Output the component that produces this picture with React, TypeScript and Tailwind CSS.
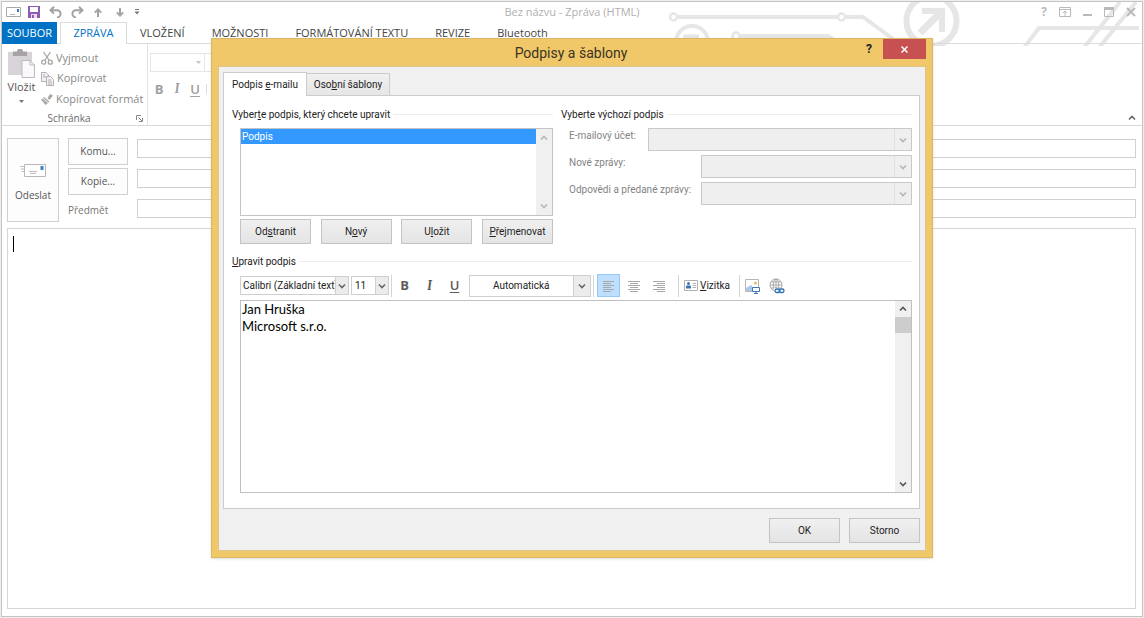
import { useState } from 'react';
import type { ReactNode } from 'react';

const ribbonTabs = ['VLOŽENÍ', 'MOŽNOSTI', 'FORMÁTOVÁNÍ TEXTU', 'REVIZE', 'Bluetooth'];

function Chevron({ up = false, className = '' }: { up?: boolean; className?: string }) {
  return (
    <svg viewBox="0 0 8 6" className={`h-[6px] w-[8px] ${className}`} fill="none" stroke="currentColor" strokeWidth="1.6">
      <path d={up ? 'M1 4.5 4 1.5 7 4.5' : 'M1 1.5 4 4.5 7 1.5'} />
    </svg>
  );
}

type ComboProps = {
  label: string;
  id?: string;
  value?: string;
  disabled?: boolean;
  className?: string;
  selectClassName?: string;
  arrowClassName?: string;
  arrow?: ReactNode;
};

function Combo({ label, id, value = '', disabled, className = '', selectClassName = '', arrowClassName = '', arrow }: ComboProps) {
  return (
    <div className={`relative border ${className}`}>
      <select
        id={id}
        aria-label={id ? undefined : label}
        disabled={disabled}
        defaultValue={value}
        className={`block h-full w-full appearance-none bg-transparent text-[10px] outline-none ${selectClassName}`}
      >
        <option value={value}>{value}</option>
      </select>
      <span className={`pointer-events-none absolute inset-y-0 right-0 flex items-center justify-center border-l ${arrowClassName}`}>
        {arrow ?? <Chevron />}
      </span>
    </div>
  );
}

function DialogButton({ children, onClick }: { children: ReactNode; onClick?: () => void }) {
  return (
    <button
      type="button"
      onClick={onClick}
      className="h-[25px] w-[71px] border border-[#c4c4c4] bg-linear-to-b from-[#f0f0f0] to-[#e4e4e4] text-[10px] text-[#222]"
    >
      {children}
    </button>
  );
}

function GroupTitle({ children }: { children: ReactNode }) {
  return (
    <div className="flex h-4 items-center gap-[3px] text-[10px] text-[#222]">
      <span className="whitespace-nowrap">{children}</span>
      <span className="h-px flex-1 bg-[#ececec]" />
    </div>
  );
}

function CircuitArt() {
  return (
    <svg viewBox="662 -1 480 44" className="absolute top-0 right-0 h-[44px] w-[480px]" fill="none" stroke="#e6e6e6" strokeWidth="4">
      <circle cx="673.5" cy="14" r="3.5" strokeWidth="2.5" />
      <path d="M677 14H838M845 14H863L900 41" />
      <circle cx="841.5" cy="14" r="3.5" strokeWidth="2.5" />
      <circle cx="736" cy="33" r="3.5" strokeWidth="2.5" />
      <path d="M740 33H828L842 42" />
      <circle cx="931.5" cy="18" r="25" strokeWidth="6" />
      <path d="M920 30 941 9" strokeWidth="7" />
      <path d="M922 8H942V29" strokeWidth="6" />
      <circle cx="692" cy="39" r="16" strokeWidth="4" />
      <path d="M686 48V34H699M687 35 701 49" strokeWidth="5" />
      <path d="M1023 46 1039 25H1139" />
      <path d="M1083 46 1120 -1M1098 46 1136 -1" />
    </svg>
  );
}

function QuickAccess() {
  return (
    <div className="flex items-center text-[#a3a3a3]">
      <button type="button" aria-label="Zpráva" className="w-[22px]">
        <svg viewBox="0 0 15 10" className="h-[10px] w-[15px]" fill="none">
          <path d="M.5.5h14v9H.5z" fill="#fff" stroke="#a8a8a8" />
          <path d="M4 7.5h5" stroke="#b5b5b5" />
          <path d="M11 2h2v3h-2z" fill="#3c78c3" />
        </svg>
      </button>
      <button type="button" aria-label="Uložit zprávu" className="w-[21px]">
        <svg viewBox="0 0 12 12" className="size-[12px]">
          <path d="M0 0h12v12H0z" fill="#8e5bb0" />
          <path d="M2 1h8v5H2z" fill="#fff" />
          <path d="M3 8h6v4H3z" fill="#e9dff0" />
          <path d="M4 9h2v3H4z" fill="#8e5bb0" />
        </svg>
      </button>
      <button type="button" aria-label="Zpět" className="w-[22px]">
        <svg viewBox="0 0 13 12" className="h-[12px] w-[13px]" fill="none" stroke="currentColor" strokeWidth="2">
          <path d="M5 .8 1.5 4.2 5 7.6M2 4.2h6a3.6 3.6 0 0 1 0 7.200" />
        </svg>
      </button>
      <button type="button" aria-label="Znovu" className="w-[23px]">
        <svg viewBox="0 0 13 12" className="h-[12px] w-[13px]" fill="none" stroke="currentColor" strokeWidth="2">
          <path d="M8 .8 11.5 4.2 8 7.6M11 4.2H5a3.6 3.6 0 0 0 0 7.200" />
        </svg>
      </button>
      <button type="button" aria-label="Předchozí položka" className="w-[22px]">
        <svg viewBox="0 0 8 9" className="h-[9px] w-[8px]" fill="none" stroke="currentColor" strokeWidth="2">
          <path d="M4 9V1.500M.8 4.600 4 1.400l3.200 3.200" />
        </svg>
      </button>
      <button type="button" aria-label="Další položka" className="w-[18px]">
        <svg viewBox="0 0 8 9" className="h-[9px] w-[8px]" fill="none" stroke="currentColor" strokeWidth="2">
          <path d="M4 0v7.500M.8 4.400 4 7.600l3.200-3.200" />
        </svg>
      </button>
      <button type="button" aria-label="Přizpůsobit panel">
        <svg viewBox="0 0 6 6" className="size-[6px]" fill="#777">
          <path d="M1 0h4v1H1zM.5 2.500h5L3 5.500z" />
        </svg>
      </button>
    </div>
  );
}

function WindowButtons() {
  return (
    <div className="flex items-center gap-[12px] text-[#bababa]">
      <button type="button" aria-label="Nápověda" className="text-[12px] leading-none font-bold">?</button>
      <button type="button" aria-label="Zobrazení pásu karet">
        <svg viewBox="0 0 12 10" className="h-[10px] w-[12px]" fill="none" stroke="currentColor">
          <path d="M.5.5h11v9H.5zM.5 2.500h11M6 9V4.500M4 6l2-2 2 2" />
        </svg>
      </button>
      <button type="button" aria-label="Minimalizovat">
        <svg viewBox="0 0 9 10" className="h-[10px] w-[9px]" fill="currentColor">
          <path d="M0 7h9v2H0z" />
        </svg>
      </button>
      <button type="button" aria-label="Maximalizovat">
        <svg viewBox="0 0 10 10" className="size-[10px]" fill="none" stroke="currentColor">
          <path d="M.5 1v8.500h9V1" />
          <path d="M0 1.500h10" strokeWidth="3" />
        </svg>
      </button>
      <button type="button" aria-label="Zavřít">
        <svg viewBox="0 0 10 10" className="size-[10px]" fill="none" stroke="currentColor" strokeWidth="2">
          <path d="m1 1 8 8M9 1 1 9" />
        </svg>
      </button>
    </div>
  );
}

function Ribbon() {
  return (
    <div className="flex h-[82px] border-b border-[#d9d9d9] text-[11px] text-[#8a8a8a]">
      <div className="flex w-[146px] flex-col border-r border-[#e3e3e3]">
        <div className="flex">
          <button type="button" className="flex w-[39px] flex-col items-center pt-[5px] text-[#555]">
            <svg viewBox="0 0 27 30" className="h-[30px] w-[27px]">
              <path d="M0 3h24v23H0z" fill="#d8d3d8" />
              <path d="M5 2.500h4a3 3 0 0 1 6 0h4V7H5z" fill="#a6a2a6" />
              <path d="M14 11.500h8l4.500 4.500v12.500H14z" fill="#fcf9fc" stroke="#bdb8bd" />
              <path d="M22 11.500V16h4.500" fill="none" stroke="#bdb8bd" />
            </svg>
            <span className="leading-4">Vložit</span>
            <svg viewBox="0 0 5 3" className="mt-[5px] h-[3px] w-[5px]" fill="#777">
              <path d="M0 0h5L2.500 3z" />
            </svg>
          </button>
          <div className="flex flex-col pt-[4px]">
            <button type="button" className="flex h-[20px] items-center gap-[3px]">
              <svg viewBox="0 0 12 13" className="h-[13px] w-[12px]" fill="none" stroke="#a8a8a8" strokeWidth="1.3">
                <path d="M2.500 0 8.300 8.500M9.500 0 3.700 8.500" />
                <circle cx="2.7" cy="10.2" r="2" />
                <circle cx="9.3" cy="10.2" r="2" />
              </svg>
              Vyjmout
            </button>
            <button type="button" className="flex h-[21px] items-center gap-[3px]">
              <svg viewBox="0 0 13 14" className="h-[14px] w-[13px]" fill="#f5f1f5" stroke="#b3aeb3">
                <path d="M.5.5H5l2.500 2.500v6.500h-7z" />
                <path d="M5.500 4.500h4l3 3v6h-7zM7 8h3M7 10h4M7 12h4M2 3h2M2 5h3" />
              </svg>
              Kopírovat
            </button>
            <button type="button" className="flex h-[20px] items-center gap-[3px]">
              <svg viewBox="0 0 12 11" className="h-[11px] w-[12px]" fill="#a8a8a8">
                <path d="M9 0 12 1.500 8.500 6 6.500 4zM3 3l5.500 4.500-1 1L2 4zM0 5.500 1.500 4.500 7 9 4.500 11z" />
              </svg>
              Kopírovat formát
            </button>
          </div>
        </div>
        <div className="mt-auto flex h-[13px] items-center text-[10px] text-[#6a6a6a]">
          <span className="w-[134px] text-center">Schránka</span>
          <button type="button" aria-label="Otevřít schránku">
            <svg viewBox="0 0 7 7" className="size-[7px]" fill="none" stroke="#888">
              <path d="M.5 5V.5H5M2.500 2.500 6 6M6.500 3v3.500H3" />
            </svg>
          </button>
        </div>
      </div>
      <div className="flex flex-col gap-[9px] pt-[9px] pl-[2px]">
        <div className="flex">
          <Combo
            label="Písmo"
            disabled
            className="h-[19px] w-[55px] border-[#e6e6e6]"
            arrowClassName="w-[12px] border-transparent"
            arrow={
              <svg viewBox="0 0 5 3" className="h-[3px] w-[5px]" fill="#c4c4c4">
                <path d="M0 0h5L2.500 3z" />
              </svg>
            }
          />
          <Combo
            label="Velikost"
            disabled
            className="h-[19px] w-[40px] border-l-0 border-[#e6e6e6]"
            arrowClassName="w-[12px] border-transparent text-[#ccc]"
          />
        </div>
        <div className="flex items-center text-[13px] leading-4 text-[#a0a0a0]">
          <button type="button" className="w-[18px] font-bold">B</button>
          <button type="button" className="w-[18px] font-serif font-bold italic">I</button>
          <button type="button" className="w-[18px] font-semibold underline underline-offset-2">U</button>
          <span className="ml-[2px] h-[10px] w-px bg-[#ddd]" />
        </div>
      </div>
      <button type="button" aria-label="Sbalit pás karet" className="mt-auto mr-[6px] mb-[4px] ml-auto text-[#666]">
        <Chevron up />
      </button>
    </div>
  );
}

function MessageForm() {
  return (
    <div className="flex gap-[9px] pt-[12px] pr-[6px] pl-[5px] text-[10px] text-[#555]">
      <button type="button" className="flex h-[84px] w-[52px] flex-col items-center gap-[10px] border border-[#d0d0d0] bg-[#fdfdfd] pt-[25px]">
        <svg viewBox="0 0 26 14" className="h-[14px] w-[26px]" fill="none">
          <path d="M4.500.5h21v12h-21z" fill="#fff" stroke="#b8b8b8" />
          <path d="M0 2.500h4M1 5h3M2 7.500h2M9 7.500h8M10 9.500h6" stroke="#bdbdbd" />
          <path d="M20.500 2h3v4h-3z" fill="#3c7fc4" />
        </svg>
        <span>Odeslat</span>
      </button>
      <div className="flex w-[60px] flex-col gap-[3px]">
        <button type="button" className="h-[27px] border border-[#d0d0d0] bg-[#fdfdfd]">Komu...</button>
        <button type="button" className="h-[27px] border border-[#d0d0d0] bg-[#fdfdfd]">Kopie...</button>
        <label htmlFor="subject" className="leading-6 text-[#777]">Předmět</label>
      </div>
      <div className="flex flex-1 flex-col gap-[11px] pt-px">
        <input aria-label="Komu" className="h-[19px] border border-[#d0d0d0] px-1 outline-none" />
        <input aria-label="Kopie" className="h-[19px] border border-[#d0d0d0] px-1 outline-none" />
        <input id="subject" className="h-[19px] border border-[#d0d0d0] px-1 outline-none" />
      </div>
    </div>
  );
}

function AlignIcon({ rows }: { rows: string }) {
  return (
    <svg viewBox="0 0 12 12" className="size-[12px]" fill="none" stroke="#a8a8a8">
      <path d={rows} />
    </svg>
  );
}

function Divider() {
  return <span className="block h-[22px] w-px bg-[#d4d4d4]" />;
}

const editorCombo = 'border-[#cfcfcf] bg-white text-[#222]';
const editorArrow = 'border-[#cfcfcf] bg-[#ececec] text-[#666]';

function SignatureToolbar() {
  return (
    <div className="flex h-[23px] items-center">
      <Combo
        label="Písmo podpisu"
        value="Calibri (Základní text)"
        className={`h-[19px] w-[109px] ${editorCombo}`}
        selectClassName="pr-[12px] pl-[2px]"
        arrowClassName={`w-[13px] ${editorArrow}`}
      />
      <Combo
        label="Velikost písma podpisu"
        value="11"
        className={`ml-[2px] h-[19px] w-[38px] ${editorCombo}`}
        selectClassName="pl-[3px]"
        arrowClassName={`w-[13px] ${editorArrow}`}
      />
      <span className="ml-[2px]"><Divider /></span>
      <div className="flex font-['Open_Sans',sans-serif] text-[13px] text-[#5c5c5c]">
        <button type="button" className="w-[25px] font-bold">B</button>
        <button type="button" className="w-[25px] font-serif font-bold italic">I</button>
        <button type="button" className="w-[25px] font-semibold underline underline-offset-2">U</button>
      </div>
      <Combo
        label="Barva písma"
        value="Automatická"
        className={`ml-[2px] h-[22px] w-[122px] ${editorCombo}`}
        selectClassName="pl-[23px]"
        arrowClassName={`w-[17px] ${editorArrow}`}
      />
      <span className="ml-[2px]"><Divider /></span>
      <div className="ml-[3px] flex w-[81px] gap-[2px]">
        <button type="button" aria-label="Zarovnat vlevo" className="flex size-[23px] items-center justify-center border border-[#98c8f5] bg-[#bfdfff]">
          <AlignIcon rows="M0 1.500h11M0 3.500h8M0 5.500h11M0 7.500h8M0 9.500h11M0 11.500h8" />
        </button>
        <button type="button" aria-label="Zarovnat na střed" className="flex size-[23px] items-center justify-center">
          <AlignIcon rows="M0 1.500h12M2 3.500h8M0 5.500h12M2 7.500h8M0 9.500h12M2 11.500h8" />
        </button>
        <button type="button" aria-label="Zarovnat vpravo" className="flex size-[23px] items-center justify-center">
          <AlignIcon rows="M0 1.500h12M4 3.500h8M0 5.500h12M4 7.500h8M0 9.500h12M4 11.500h8" />
        </button>
      </div>
      <Divider />
      <button type="button" className="ml-[5px] flex w-[55px] items-center gap-[2px] text-[10px] text-[#222]">
        <svg viewBox="0 0 14 11" className="h-[11px] w-[14px]" fill="none">
          <path d="M.5.5h13v10H.5z" fill="#fff" stroke="#b0b0b0" />
          <circle cx="4.5" cy="3.5" r="1.5" fill="#3b74b5" />
          <path d="M2 8.500V6.500a1 1 0 0 1 1-1h3a1 1 0 0 1 1 1v2z" fill="#3b74b5" />
          <path d="M8.500 3.500H12M8.500 5.500H12M8.500 7.500H12" stroke="#b0b0b0" />
        </svg>
        <span><u>V</u>izitka</span>
      </button>
      <Divider />
      <button type="button" aria-label="Vložit obrázek" className="ml-[5px]">
        <svg viewBox="0 0 16 16" className="size-[16px]" fill="none">
          <path d="M.5 1.500h13v12H.5z" fill="#fff" stroke="#b5b5b5" />
          <circle cx="10.5" cy="5" r="1.5" fill="#f0b95b" />
          <path d="M1 13V10l5-3 5 6z" fill="#a9c9e6" />
          <path d="M7.500 9.500h7v4h-7z" fill="#fff" stroke="#3c78b8" />
          <path d="M11 14v2M9 15.500h4" stroke="#3c78b8" />
        </svg>
      </button>
      <button type="button" aria-label="Vložit odkaz" className="ml-[8px]">
        <svg viewBox="0 0 16 16" className="size-[16px]" fill="none">
          <g stroke="#a8a8a8">
            <circle cx="7" cy="7" r="6" />
            <ellipse cx="7" cy="7" rx="2.7" ry="6" />
            <path d="M1 7h12M2 4h10M2 10h10M7 1v12" />
          </g>
          <path d="M5 10h11v6H5z" fill="#fff" />
          <rect x="6" y="11" width="5" height="3.5" rx="1.7" stroke="#2f6fb0" strokeWidth="1.3" />
          <rect x="10" y="11" width="5" height="3.5" rx="1.7" stroke="#2f6fb0" strokeWidth="1.3" />
        </svg>
      </button>
    </div>
  );
}

const accounts = [
  { id: 'account', label: 'E-mailový účet:', width: 'w-[264px]' },
  { id: 'new-messages', label: 'Nové zprávy:', width: 'w-[211px]' },
  { id: 'replies', label: 'Odpovědi a předané zprávy:', width: 'w-[211px]' },
];

function SignatureDialog({ onClose }: { onClose: () => void }) {
  const [text, setText] = useState('Jan Hruška\nMicrosoft s.r.o.');

  return (
    <div
      role="dialog"
      aria-labelledby="dialog-title"
      className="absolute inset-x-0 top-[38px] mx-auto w-[722px] border border-[#d9b765] bg-[#f0c869] px-[6px] pb-[6px] font-[Roboto,'Open_Sans',sans-serif] shadow-sm"
    >
      <div className="flex h-[27px] items-start">
        <div className="w-[58px]" />
        <h1 id="dialog-title" className="flex-1 text-center text-[14px] leading-7 text-[#3a3323]">Podpisy a šablony</h1>
        <button type="button" aria-label="Nápověda k dialogu" className="w-[17px] text-left text-[12px] leading-5 font-bold text-[#222]">?</button>
        <button type="button" aria-label="Zavřít dialog" onClick={onClose} className="flex h-[20px] w-[43px] items-center justify-center bg-[#c75050] text-white">
          <svg viewBox="0 0 7 7" className="size-[7px]" fill="none" stroke="currentColor" strokeWidth="1.5">
            <path d="m.5.5 6 6M6.500.5l-6 6" />
          </svg>
        </button>
      </div>

      <div className="border border-[#dcc58e] bg-[#f0f0f0] pt-[5px] pr-[5px] pb-[7px] pl-[4px]">
        <div role="tablist" className="flex h-[23px] items-end text-[10px] text-[#222]">
          <button type="button" role="tab" aria-selected="true" className="z-10 -mb-px h-[24px] w-[84px] border border-b-0 border-[#ccc] bg-white">
            Podpis <u>e</u>-mailu
          </button>
          <button type="button" role="tab" aria-selected="false" className="h-[22px] w-[83px] border border-b-0 border-l-0 border-[#ccc] bg-linear-to-b from-[#f0f0f0] to-[#e6e6e6]">
            Oso<u>b</u>ní šablony
          </button>
        </div>

        <div className="border border-[#ccc] bg-white pt-[10px] pr-[7px] pb-[15px] pl-[8px]">
          <div className="flex gap-[8px]">
            <section className="w-[321px]">
              <GroupTitle>Vyber<u>t</u>e podpis, který chcete upravit</GroupTitle>
              <div className="mt-[6px] ml-[8px] flex h-[88px] border border-[#c4c4c4]">
                <ul role="listbox" aria-label="Podpisy" className="flex-1 bg-white text-[10px]">
                  <li role="option" aria-selected="true" className="h-[15px] bg-[#3399ff] px-px leading-[15px] text-white">Podpis</li>
                </ul>
                <div className="flex w-[16px] flex-col items-center justify-between bg-[#f0f0f0] py-[6px] text-[#b5b5b5]">
                  <Chevron up />
                  <Chevron />
                </div>
              </div>
              <div className="mt-[3px] ml-[8px] flex justify-between">
                <DialogButton>Od<u>s</u>tranit</DialogButton>
                <DialogButton>N<u>o</u>vý</DialogButton>
                <DialogButton>U<u>l</u>ožit</DialogButton>
                <DialogButton><u>P</u>řejmenovat</DialogButton>
              </div>
            </section>

            <section className="flex-1">
              <GroupTitle>Vyberte výchozí podpis</GroupTitle>
              <div className="mt-[6px] ml-[8px] flex flex-col gap-[4px]">
                {accounts.map((account) => (
                  <div key={account.id} className="flex items-start justify-between">
                    <label htmlFor={account.id} className="text-[10px] leading-4 whitespace-nowrap text-[#838383]">{account.label}</label>
                    <Combo
                      label={account.label}
                      id={account.id}
                      disabled
                      className={`h-[23px] border-[#c9c9c9] bg-[#efefef] ${account.width}`}
                      arrowClassName="w-[17px] border-[#e0e0e0] text-[#b5b5b5]"
                    />
                  </div>
                ))}
              </div>
            </section>
          </div>

          <section className="mt-[9px]">
            <GroupTitle><u>U</u>pravit podpis</GroupTitle>
            <div className="mt-[5px] ml-[8px]">
              <SignatureToolbar />
              <div className="mt-[3px] flex h-[193px] border border-[#bfbfc4]">
                <textarea
                  aria-label="Text podpisu"
                  value={text}
                  onChange={(e) => setText(e.target.value)}
                  className="flex-1 resize-none overflow-hidden px-px font-[Lato,'Liberation_Sans',sans-serif] text-[13px] leading-[17px] text-black outline-none"
                />
                <div className="flex w-[16px] flex-col items-center bg-[#f0f0f0] text-[#555]">
                  <span className="flex h-[16px] items-center"><Chevron up /></span>
                  <span className="h-[16px] w-full bg-[#cdcdcd]" />
                  <span className="mt-auto flex h-[16px] items-center"><Chevron /></span>
                </div>
              </div>
            </div>
          </section>
        </div>

        <div className="mt-[9px] flex justify-end gap-[9px]">
          <DialogButton onClick={onClose}>OK</DialogButton>
          <DialogButton onClick={onClose}>Storno</DialogButton>
        </div>
      </div>
    </div>
  );
}

export default function App() {
  const [open, setOpen] = useState(true);

  return (
    <div className="relative flex min-h-screen flex-col bg-[#eeeeee] p-px font-['Open_Sans','Noto_Sans',sans-serif]">
      <div className="relative flex flex-1 flex-col border border-[#c4c4c4] bg-white">
        <CircuitArt />
        <header className="relative flex h-[20px] items-center justify-between pr-[6px] pl-[4px]">
          <QuickAccess />
          <p className="absolute inset-x-0 text-center text-[11px] text-[#b0b0b0]">Bez názvu - Zpráva (HTML)</p>
          <WindowButtons />
        </header>

        <nav className="relative flex h-[22px] text-[11px] text-[#444]">
          <button type="button" className="w-[55px] bg-[#0072c6] text-white">SOUBOR</button>
          <span className="w-[3px] border-b border-[#dcdcdc]" />
          <button type="button" className="w-[67px] border-x border-t border-[#dcdcdc] bg-white text-[#0072c6]">ZPRÁVA</button>
          <div className="flex flex-1 gap-[27px] border-b border-[#dcdcdc] pt-[2px] pl-[13px]">
            {ribbonTabs.map((tab) => (
              <button type="button" key={tab}>{tab}</button>
            ))}
          </div>
        </nav>

        <Ribbon />
        <MessageForm />

        <div className="relative mt-[6px] mr-[6px] mb-[7px] ml-[5px] flex flex-1 border border-[#d3d6da]">
          <textarea aria-label="Text zprávy" className="flex-1 resize-none p-[4px] text-[12px] text-black outline-none" />
          {/* Text cursor */}
          <span className="pointer-events-none absolute top-[7px] left-[5px] h-4 w-px bg-black" />
        </div>
      </div>

      {open && <SignatureDialog onClose={() => setOpen(false)} />}
    </div>
  );
}
